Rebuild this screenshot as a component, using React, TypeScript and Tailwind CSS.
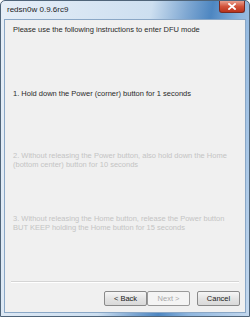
import React from 'react';

const Btn = ({ label, disabled }: { label: string; disabled?: boolean }) => (
  <div
    className={`flex h-[15px] w-[43px] items-center justify-center rounded-[2px] border text-[7.5px] ${
      disabled
        ? 'border-[#9a9a9a] bg-[#f4f4f4] text-[#a8a8a8]'
        : 'border-[#8a8a8a] bg-[linear-gradient(#f6f6f6,#e4e4e4_50%,#d9d9d9)] text-[#1a1a1a]'
    }`}
  >
    {label}
  </div>
);

export default function App() {
  return (
    <div
      className="flex h-[317px] w-[250px] flex-col overflow-hidden rounded-t-[5px] border border-[#4f6479] bg-[linear-gradient(100deg,#e6eef7_0%,#cddff0_50%,#7ea7d2_62%,#4d86c1_70%,#8fb6de_80%,#c3d8ee_100%)]"
      style={{ fontFamily: '"Liberation Sans", Arial, sans-serif' }}
    >
      {/* Title bar */}
      <div className="flex h-[18px] shrink-0 items-start justify-between pl-[6px] pr-[4px]">
        <span className="mt-[4px] text-[8px] leading-[10px] text-[#1c1c1c]">redsn0w 0.9.6rc9</span>
        <div className="flex h-[12px] w-[26px] items-center justify-center rounded-b-[3px] border border-t-0 border-[#7a2a22] bg-[linear-gradient(#e8a08f,#d2533b_50%,#b8321c)]">
          <svg width="8" height="7" viewBox="0 0 8 7">
            <path d="M1 1 L7 6 M7 1 L1 6" stroke="#fff" strokeWidth="1.8" strokeLinecap="square" />
          </svg>
        </div>
      </div>

      {/* Client area */}
      <div className="mx-[3px] mb-[3px] flex flex-1 flex-col border border-[#8aa7c6] bg-[#f0f0f0] text-[7.5px] leading-[9px]">
        <div className="px-[8px] pt-[5px] text-[#2a2a2a]">
          Please use the following instructions to enter DFU mode
        </div>
        <div className="mt-[55px] px-[8px] text-[#2a2a2a]">
          1. Hold down the Power (corner) button for 1 seconds
        </div>
        <div className="mt-[53px] px-[8px] text-[#c4c4c4]">
          2. Without releasing the Power button, also hold down the Home (bottom center) button for 10 seconds
        </div>
        <div className="mt-[45px] px-[8px] text-[#c4c4c4]">
          3. Without releasing the Home button, release the Power button BUT KEEP holding the Home button for 15 seconds
        </div>
        <div className="flex-1" />
        <div className="mx-[6px] h-[2px] border-t border-b border-t-[#d5d5d5] border-b-[#ffffff]" />
        <div className="flex justify-end gap-[7px] px-[5px] pb-[6px] pt-[8px]">
          <div className="flex">
            <Btn label="< Back" />
            <Btn label="Next >" disabled />
          </div>
          <Btn label="Cancel" />
        </div>
      </div>
    </div>
  );
}
